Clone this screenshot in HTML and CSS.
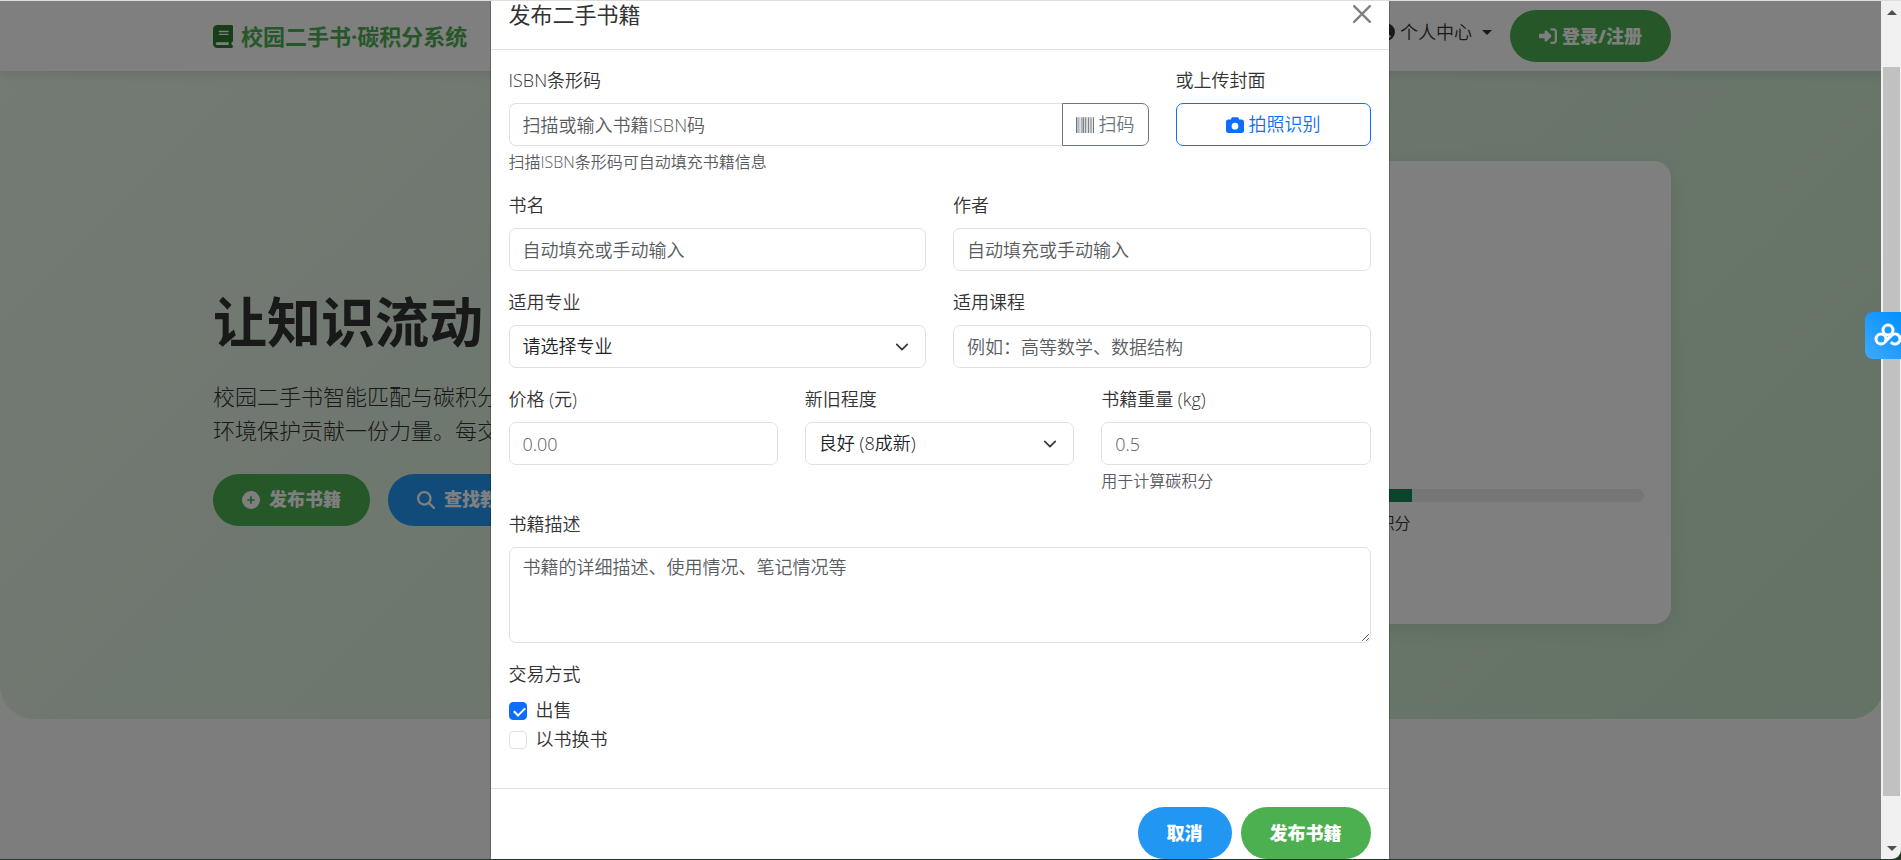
FILE: index.html
```html
<!DOCTYPE html>
<html lang="zh-CN">
<head>
    <meta charset="UTF-8">
    <meta name="viewport" content="width=device-width, initial-scale=1.0">
    <title>校园二手书·碳积分系统</title>
    <link rel="stylesheet" href="styles.css">
</head>
<body>
<div class="window">
    <div class="page">
        <div class="site">
            <!-- 导航栏 -->
            <nav class="navbar">
                <div class="container">
                    <a class="brand" href="#">
                        <svg class="brand-icon" viewBox="0 0 448 512"><path d="M96 0C43 0 0 43 0 96V416c0 53 43 96 96 96H384h32c17.7 0 32-14.3 32-32s-14.3-32-32-32V384c17.7 0 32-14.3 32-32V32c0-17.7-14.3-32-32-32H384 96zm0 384H352v64H96c-17.7 0-32-14.3-32-32s14.3-32 32-32zm32-240c0-8.8 7.2-16 16-16H336c8.8 0 16 7.2 16 16s-7.2 16-16 16H144c-8.8 0-16-7.2-16-16zm16 48H336c8.8 0 16 7.2 16 16s-7.2 16-16 16H144c-8.8 0-16-7.2-16-16s7.2-16 16-16z"/></svg>
                        校园二手书·碳积分系统
                    </a>
                    <div class="nav-right">
                        <a class="nav-link" href="#">
                            <svg class="icon" viewBox="0 0 512 512"><path d="M399 384.2C376.9 345.8 335.4 320 288 320H224c-47.4 0-88.9 25.8-111 64.2c35.2 39.2 86.2 63.8 143 63.8s107.8-24.7 143-63.8zM0 256a256 256 0 1 1 512 0A256 256 0 1 1 0 256zm256 16a72 72 0 1 0 0-144 72 72 0 1 0 0 144z"/></svg>
                            个人中心
                            <span class="caret"></span>
                        </a>
                        <button class="btn btn-green btn-login" type="button">
                            <svg class="icon" viewBox="0 0 512 512"><path d="M217.9 105.9L340.7 228.7c7.2 7.2 11.3 17.1 11.3 27.3s-4.1 20.1-11.3 27.3L217.9 406.1c-6.4 6.4-15 9.9-24 9.9c-18.7 0-33.9-15.2-33.9-33.9l0-62.1L32 320c-17.7 0-32-14.3-32-32l0-64c0-17.7 14.3-32 32-32l128 0 0-62.1c0-18.7 15.2-33.9 33.9-33.9c9 0 17.6 3.6 24 9.9zM352 416l64 0c17.7 0 32-14.3 32-32l0-256c0-17.7-14.3-32-32-32l-64 0c-17.7 0-32-14.3-32-32s14.3-32 32-32l64 0c53 0 96 43 96 96l0 256c0 53-43 96-96 96l-64 0c-17.7 0-32-14.3-32-32s14.3-32 32-32z"/></svg>
                            登录/注册
                        </button>
                    </div>
                </div>
            </nav>

            <!-- 首屏 -->
            <section class="hero">
                <div class="container hero-row">
                    <div class="hero-text">
                        <h1>让知识流动，让地球呼吸</h1>
                        <p>校园二手书智能匹配与碳积分激励系统，为你节省每一分教材开支，为<br>环境保护贡献一份力量。每交易一本书，就能获得相应的碳积分。</p>
                        <div class="hero-buttons">
                            <button class="btn btn-green" type="button">
                                <svg class="icon" viewBox="0 0 512 512"><path d="M256 512A256 256 0 1 0 256 0a256 256 0 1 0 0 512zM232 344V280H168c-13.3 0-24-10.7-24-24s10.7-24 24-24h64V168c0-13.3 10.7-24 24-24s24 10.7 24 24v64h64c13.3 0 24 10.7 24 24s-10.7 24-24 24H280v64c0 13.3-10.7 24-24 24s-24-10.7-24-24z"/></svg>
                                发布书籍
                            </button>
                            <button class="btn btn-blue" type="button">
                                <svg class="icon" viewBox="0 0 512 512"><path d="M416 208c0 45.9-14.9 88.3-40 122.7L502.6 457.4c12.5 12.5 12.5 32.8 0 45.3s-32.8 12.5-45.3 0L330.7 376c-34.4 25.2-76.8 40-122.7 40C93.1 416 0 322.9 0 208S93.1 0 208 0S416 93.1 416 208zM208 352a144 144 0 1 0 0-288 144 144 0 1 0 0 288z"/></svg>
                                查找教材
                            </button>
                        </div>
                    </div>
                    <div class="carbon-card">
                        <div class="progress"><div class="progress-bar" style="width: 65%"></div></div>
                        <p>距离下一等级还需要35积分</p>
                    </div>
                </div>
            </section>
        </div>

        <div class="backdrop"></div>

        <!-- 发布书籍弹窗 -->
        <div class="modal" role="dialog" aria-labelledby="modal-title">
            <div class="modal-header">
                <h2 id="modal-title">发布二手书籍</h2>
                <button class="btn-close" type="button" aria-label="关闭">
                    <svg viewBox="0 0 16 16"><path d="M1 1L15 15M15 1L1 15"/></svg>
                </button>
            </div>
            <form class="modal-body">
                <div class="row row-isbn">
                    <div class="field">
                        <label for="isbn">ISBN条形码</label>
                        <div class="input-group">
                            <input class="control" id="isbn" type="text" placeholder="扫描或输入书籍ISBN码">
                            <button class="btn-outline btn-scan" type="button">
                                <svg class="icon" viewBox="0 0 512 512"><path d="M0 32h40v448H0zM56 32h16v448H56zM104 32h16v448h-16zM144 32h16v448h-16zM184 32h40v448h-40zM248 32h32v448h-32zM304 32h16v448h-16zM344 32h32v448h-32zM408 32h16v448h-16zM440 32h16v448h-16zM480 32h32v448h-32z"/></svg>
                                扫码
                            </button>
                        </div>
                        <div class="help">扫描ISBN条形码可自动填充书籍信息</div>
                    </div>
                    <div class="field">
                        <label for="cover">或上传封面</label>
                        <button class="btn-outline btn-photo" id="cover" type="button">
                            <svg class="icon" viewBox="0 0 512 512"><path d="M149.1 64.8L138.7 96H64C28.7 96 0 124.7 0 160V416c0 35.3 28.7 64 64 64H448c35.3 0 64-28.7 64-64V160c0-35.3-28.7-64-64-64H373.3L362.9 64.8C356.4 45.2 338.1 32 317.4 32H194.6c-20.7 0-39 13.2-45.5 32.8zM256 192a96 96 0 1 1 0 192 96 96 0 1 1 0-192z"/></svg>
                            拍照识别
                        </button>
                    </div>
                </div>
                <div class="row row-2">
                    <div class="field">
                        <label for="title">书名</label>
                        <input class="control" id="title" type="text" placeholder="自动填充或手动输入">
                    </div>
                    <div class="field">
                        <label for="author">作者</label>
                        <input class="control" id="author" type="text" placeholder="自动填充或手动输入">
                    </div>
                </div>
                <div class="row row-2">
                    <div class="field">
                        <label for="major">适用专业</label>
                        <div class="select-wrap">
                            <select class="control" id="major">
                                <option>请选择专业</option>
                                <option>计算机科学</option>
                            </select>
                            <svg class="chevron" viewBox="0 0 16 16"><path d="m2 5 6 6 6-6"/></svg>
                        </div>
                    </div>
                    <div class="field">
                        <label for="course">适用课程</label>
                        <input class="control" id="course" type="text" placeholder="例如：高等数学、数据结构">
                    </div>
                </div>
                <div class="row row-3">
                    <div class="field">
                        <label for="price">价格 (元)</label>
                        <input class="control" id="price" type="text" placeholder="0.00">
                    </div>
                    <div class="field">
                        <label for="quality">新旧程度</label>
                        <div class="select-wrap">
                            <select class="control" id="quality">
                                <option>良好 (8成新)</option>
                                <option>全新</option>
                            </select>
                            <svg class="chevron" viewBox="0 0 16 16"><path d="m2 5 6 6 6-6"/></svg>
                        </div>
                    </div>
                    <div class="field">
                        <label for="weight">书籍重量 (kg)</label>
                        <input class="control" id="weight" type="text" placeholder="0.5">
                        <div class="help">用于计算碳积分</div>
                    </div>
                </div>
                <div class="row">
                    <div class="field">
                        <label for="desc">书籍描述</label>
                        <textarea class="control" id="desc" placeholder="书籍的详细描述、使用情况、笔记情况等"></textarea>
                    </div>
                </div>
                <fieldset>
                    <legend>交易方式</legend>
                    <div class="check"><input type="checkbox" id="sell" checked><label for="sell">出售</label></div>
                    <div class="check"><input type="checkbox" id="swap"><label for="swap">以书换书</label></div>
                </fieldset>
            </form>
            <div class="modal-footer">
                <button class="btn btn-blue" type="button">取消</button>
                <button class="btn btn-green" type="button">发布书籍</button>
            </div>
        </div>
    </div>

    <div class="scrollbar" aria-hidden="true">
        <span class="arrow arrow-up"></span>
        <div class="thumb"></div>
        <span class="arrow arrow-down"></span>
    </div>

    <a class="float-tool" href="#" aria-label="网盘">
        <svg viewBox="0 0 36 47"><circle cx="23" cy="18" r="5"/><circle cx="16" cy="27" r="5"/><path d="M20 30L27 23A5 5 0 1 1 26 30"/></svg>
    </a>
</div>
</body>
</html>
```
FILE: styles.css
```css
* {
    box-sizing: border-box;
}
body {
    margin: 0;
    background-color: #1f3d26;
    color: #333;
    font-family: "Open Sans", "Noto Sans CJK SC", sans-serif;
    font-size: 18px;
    font-weight: 350;
    line-height: 27px;
}
h1, h2, p, fieldset, legend {
    margin: 0;
    padding: 0;
    border: 0;
}
button, input, select, textarea {
    font: inherit;
    color: inherit;
}
a {
    color: inherit;
    text-decoration: none;
}
.window {
    position: relative;
    display: grid;
    grid-template-columns: 1fr 20px;
    height: calc(100vh - 1px);
    border-top: 1px solid #ddd;
    border-bottom-right-radius: 9px;
    overflow: hidden;
}
.page {
    position: relative;
    overflow: hidden;
    background-color: #fafafa;
}
.site {
    margin-right: -3px;
}
.container {
    max-width: 1458px;
    margin: 0 auto;
}
.icon {
    width: 18px;
    height: 18px;
    fill: currentColor;
    flex: none;
}

/* 按钮 */
.btn {
    display: inline-flex;
    align-items: center;
    gap: 9px;
    height: 52px;
    padding: 0 29px;
    border: 0;
    border-radius: 26px;
    color: #fff;
    font-weight: 800;
    white-space: nowrap;
}
.btn-green {
    background-color: #4caf50;
}
.btn-blue {
    background-color: #2196f3;
}
.btn-login {
    gap: 5px;
}

/* 导航栏 */
.navbar {
    position: relative;
    z-index: 1;
    background-color: #fff;
    box-shadow: 0 2px 11px rgba(0, 0, 0, 0.1);
}
.navbar .container {
    display: flex;
    justify-content: space-between;
    align-items: center;
    height: 70px;
}
.brand {
    display: flex;
    align-items: center;
    gap: 8px;
    color: #4caf50;
    font-size: 22px;
    font-weight: 700;
}
.brand-icon {
    width: 20px;
    height: 23px;
    fill: #2e7d32;
}
.nav-right {
    display: flex;
    align-items: center;
    gap: 18px;
}
.nav-link {
    display: flex;
    align-items: center;
    gap: 5px;
    margin-bottom: 8px;
}
.caret {
    margin-left: 5px;
    border: 5px solid transparent;
    border-top-color: #333;
    border-bottom: 0;
}

/* 首屏 */
.hero {
    padding: 90px 0 95px;
    background: linear-gradient(135deg, #e8f5e9, #c8e6c9);
    border-radius: 0 0 34px 34px;
}
.hero-row {
    display: grid;
    grid-template-columns: 1fr 1fr;
    gap: 27px;
    align-items: center;
}
.hero-text {
    padding-top: 30px;
    white-space: nowrap;
}
.hero-text h1 {
    margin-bottom: 24px;
    font-size: 54px;
    line-height: 65px;
    font-weight: 700;
}
.hero-text p {
    margin-bottom: 27px;
    font-size: 22px;
    font-weight: 300;
    line-height: 34px;
}
.hero-buttons {
    display: flex;
    gap: 18px;
}
.carbon-card {
    height: 463px;
    padding: 328px 27px 0;
    background-color: #fff;
    border-radius: 17px;
    box-shadow: 0 6px 22px rgba(0, 0, 0, 0.08);
    font-size: 16px;
    text-align: center;
}
.progress {
    height: 13px;
    margin-bottom: 8px;
    background-color: #e9ecef;
    border-radius: 7px;
    overflow: hidden;
}
.progress-bar {
    height: 100%;
    background-color: #198754;
}
.backdrop {
    position: absolute;
    inset: 0;
    z-index: 2;
    background-color: rgba(0, 0, 0, 0.5);
}

/* 弹窗 */
.modal {
    position: absolute;
    top: 0;
    left: 50%;
    z-index: 3;
    width: 900px;
    margin-left: -451px;
    background-color: #fff;
    border: 1px solid rgba(0, 0, 0, 0.18);
    border-width: 0 1px;
    background-clip: padding-box;
}
.modal-header {
    display: flex;
    justify-content: space-between;
    padding: 0 18px 21px;
    border-bottom: 1px solid #dee2e6;
}
.modal-header h2 {
    font-size: 22px;
    line-height: 27px;
    font-weight: 400;
}
.btn-close {
    width: 18px;
    height: 26px;
    padding: 0;
    border: 0;
    background: none;
    opacity: 0.5;
}
.btn-close svg {
    display: block;
    width: 18px;
    height: 18px;
    fill: none;
    stroke: #000;
    stroke-width: 2;
    stroke-linecap: round;
}
.modal-body {
    padding: 17px 18px;
}
.row {
    display: grid;
    gap: 27px;
    margin-bottom: 18px;
}
.row-isbn {
    grid-template-columns: 640px 1fr;
}
.row-2 {
    grid-template-columns: 1fr 1fr;
}
.row-3 {
    grid-template-columns: 1fr 1fr 1fr;
}
.field label, legend {
    display: block;
    margin-bottom: 9px;
}
.control {
    display: block;
    width: 100%;
    height: 43px;
    padding: 7px 13px;
    background-color: #fff;
    border: 1px solid #dee2e6;
    border-radius: 7px;
    color: #212529;
}
.control::placeholder {
    color: #595c5f;
    opacity: 1;
}
select.control {
    appearance: none;
}
textarea.control {
    height: 96px;
    padding-top: 6px;
    resize: vertical;
}
.select-wrap {
    position: relative;
}
.chevron {
    position: absolute;
    top: 15px;
    right: 17px;
    width: 14px;
    height: 14px;
    fill: none;
    stroke: #343a40;
    stroke-width: 2;
    stroke-linecap: round;
    stroke-linejoin: round;
    pointer-events: none;
}
.input-group {
    display: flex;
}
.input-group .control {
    border-right: 0;
    border-radius: 7px 0 0 7px;
}
.btn-outline {
    display: flex;
    align-items: center;
    justify-content: center;
    gap: 5px;
    height: 43px;
    padding: 0 13px;
    background: none;
    border: 1px solid currentColor;
    border-radius: 7px;
    white-space: nowrap;
}
.btn-scan {
    flex: none;
    border-radius: 0 7px 7px 0;
    color: #6c757d;
}
.btn-photo {
    width: 100%;
    color: #0d6efd;
}
.help {
    margin-top: 4px;
    color: #595c5f;
    font-size: 16px;
    line-height: 24px;
}
fieldset {
    margin-bottom: 18px;
}
.check {
    display: flex;
    align-items: center;
    gap: 9px;
}
.check + .check {
    margin-top: 2px;
}
.check input {
    appearance: none;
    position: relative;
    width: 18px;
    height: 18px;
    margin: 0;
    background-color: #fff;
    border: 1px solid #dee2e6;
    border-radius: 4px;
}
.check input:checked {
    background-color: #0d6efd;
    border-color: #0d6efd;
}
.check input:checked::after {
    content: "";
    position: absolute;
    left: 4px;
    top: 4px;
    width: 9px;
    height: 5px;
    border-left: 2px solid #fff;
    border-bottom: 2px solid #fff;
    transform: rotate(-45deg);
}
.modal-footer {
    display: flex;
    justify-content: flex-end;
    gap: 9px;
    padding: 18px;
    border-top: 1px solid #dee2e6;
}

/* 滚动条 */
.scrollbar {
    display: flex;
    flex-direction: column;
    align-items: center;
    justify-content: space-between;
    padding: 9px 1px 8px 2px;
    background-color: #f0f0f0;
}
.thumb {
    width: 100%;
    flex: 1;
    margin: 52px 0 50px;
    background-color: #c1c1c1;
}
.arrow {
    border: 5px solid transparent;
}
.arrow-up {
    border-top: 0;
    border-bottom-color: #505050;
}
.arrow-down {
    border-bottom: 0;
    border-top-color: #505050;
}
.float-tool {
    position: absolute;
    top: 311px;
    right: 0;
    z-index: 4;
    width: 36px;
    height: 47px;
    background: linear-gradient(45deg, #3fa9ff, #0090ff);
    border-radius: 8px 0 0 8px;
}
.float-tool svg {
    display: block;
    fill: none;
    stroke: #fff;
    stroke-width: 3;
}
```
